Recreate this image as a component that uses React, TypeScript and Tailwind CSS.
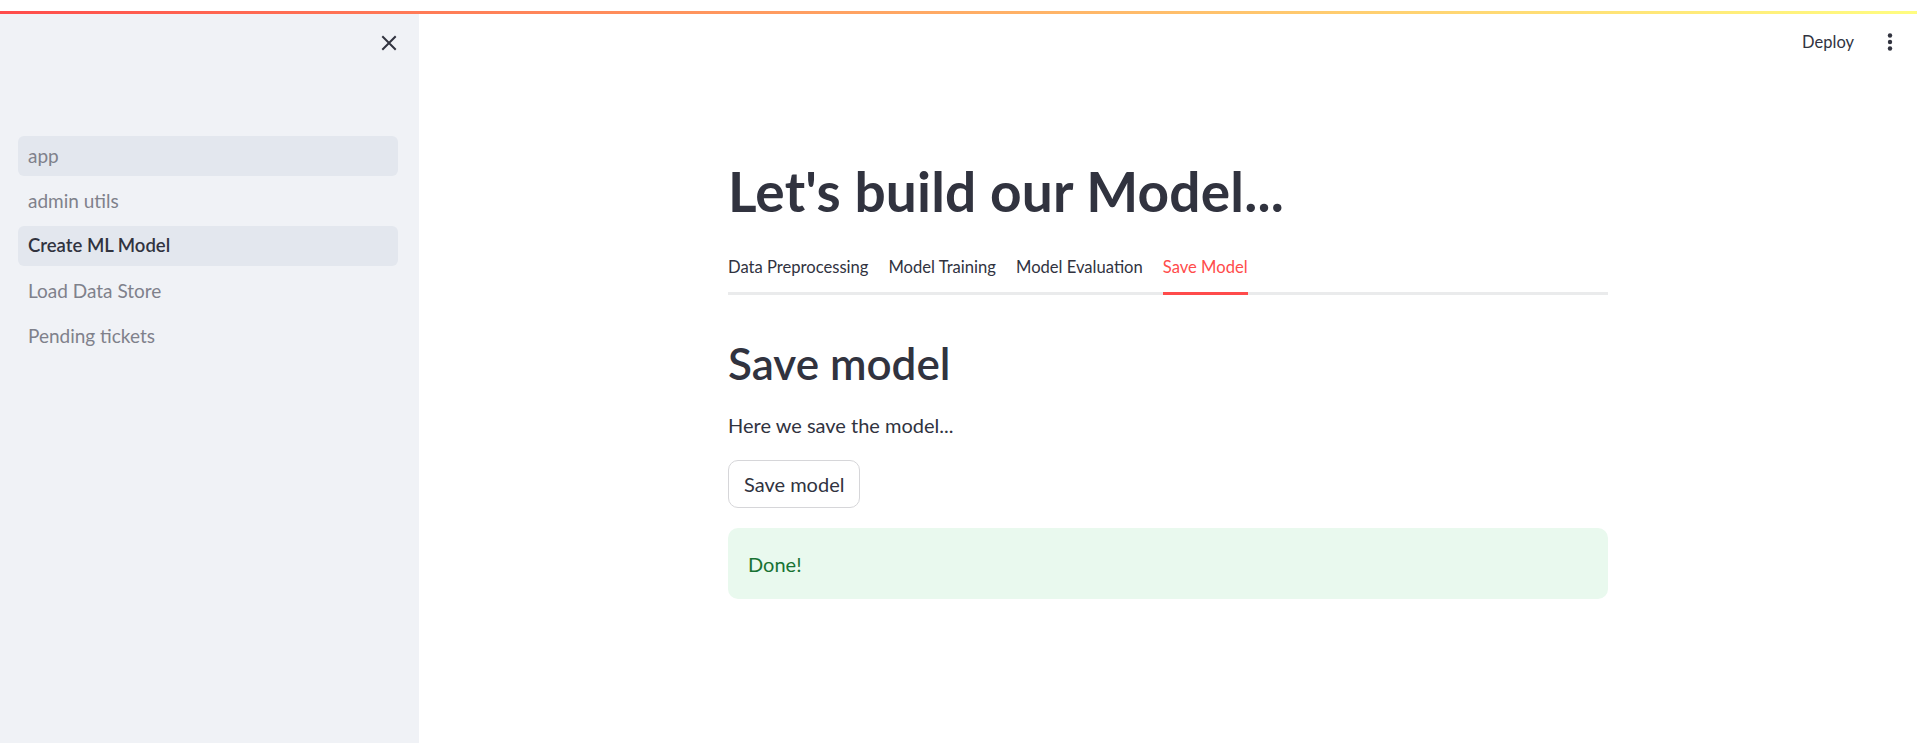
import React from "react";

const navItems = [
  { label: "app", hover: true },
  { label: "admin utils" },
  { label: "Create ML Model", active: true },
  { label: "Load Data Store" },
  { label: "Pending tickets" },
];

const tabs = ["Data Preprocessing", "Model Training", "Model Evaluation", "Save Model"];

function CloseIcon() {
  return (
    <svg width="16" height="16" viewBox="0 0 16 16" fill="none">
      <path d="M2 2L14 14M14 2L2 14" stroke="#31333f" strokeWidth="2" strokeLinecap="square" />
    </svg>
  );
}

function KebabIcon() {
  return (
    <svg width="6" height="18" viewBox="0 0 6 18" fill="#31333f">
      <circle cx="3" cy="2.5" r="2.2" />
      <circle cx="3" cy="9" r="2.2" />
      <circle cx="3" cy="15.5" r="2.2" />
    </svg>
  );
}

export default function App() {
  return (
    <div className="h-screen w-full flex flex-col bg-white text-[#31333f] font-['Lato',sans-serif] overflow-hidden">
      <div className="h-[11px] bg-white" />
      <div className="h-[3px] bg-gradient-to-r from-[#ff4b4b] to-[#fffd80]" />

      <div className="flex flex-1 min-h-0">
        <aside className="w-[419px] shrink-0 bg-[#f0f2f6] flex flex-col">
          <div className="flex justify-end pt-[21px] pr-[22px]">
            <CloseIcon />
          </div>
          <nav className="mt-[85px] pl-[18px] pr-[21px] flex flex-col gap-[5px]">
            {navItems.map((item) => (
              <div
                key={item.label}
                className={`h-[40px] rounded-[6px] px-[10px] flex items-center ${
                  item.active
                    ? "bg-[#e3e7ee] text-[#31333f] font-semibold text-[18.5px]"
                    : item.hover
                    ? "bg-[#e3e7ee] text-[#7f818b] text-[19px]"
                    : "text-[#7f818b] text-[19px]"
                }`}
              >
                {item.label}
              </div>
            ))}
          </nav>
        </aside>

        <main className="flex-1 flex flex-col min-w-0">
          <header className="h-[56px] flex items-center justify-end gap-[33px] pr-[24px]">
            <span className="text-[16.5px]">Deploy</span>
            <KebabIcon />
          </header>

          <div className="w-[880px] mx-auto">
            <h1 className="mt-[88px] text-[55px] font-bold leading-[66px] tracking-[0.2px]">
              Let's build our Model...
            </h1>

            <div className="mt-[26px] flex gap-[20px] border-b-[3px] border-[#eaebec]">
              {tabs.map((t) => (
                <div
                  key={t}
                  className={`h-[45px] -mb-[3px] flex items-start pt-[5px] text-[16.6px] ${
                    t === "Save Model" ? "text-[#ff4b4b] border-b-[3px] border-[#ff4b4b]" : ""
                  }`}
                >
                  {t}
                </div>
              ))}
            </div>

            <h2 className="mt-[41px] text-[44px] font-semibold leading-[54px]">Save model</h2>

            <p className="mt-[20px] text-[20px] leading-[30px]">Here we save the model...</p>

            <button className="mt-[20px] h-[48px] px-[15px] rounded-[10px] border border-[#d6d6d9] bg-white text-[20px]">
              Save model
            </button>

            <div className="mt-[20px] h-[71px] rounded-[10px] bg-[#e9f9ee] px-[20px] flex items-center text-[20px] text-[#177233]">
              Done!
            </div>
          </div>
        </main>
      </div>
    </div>
  );
}
